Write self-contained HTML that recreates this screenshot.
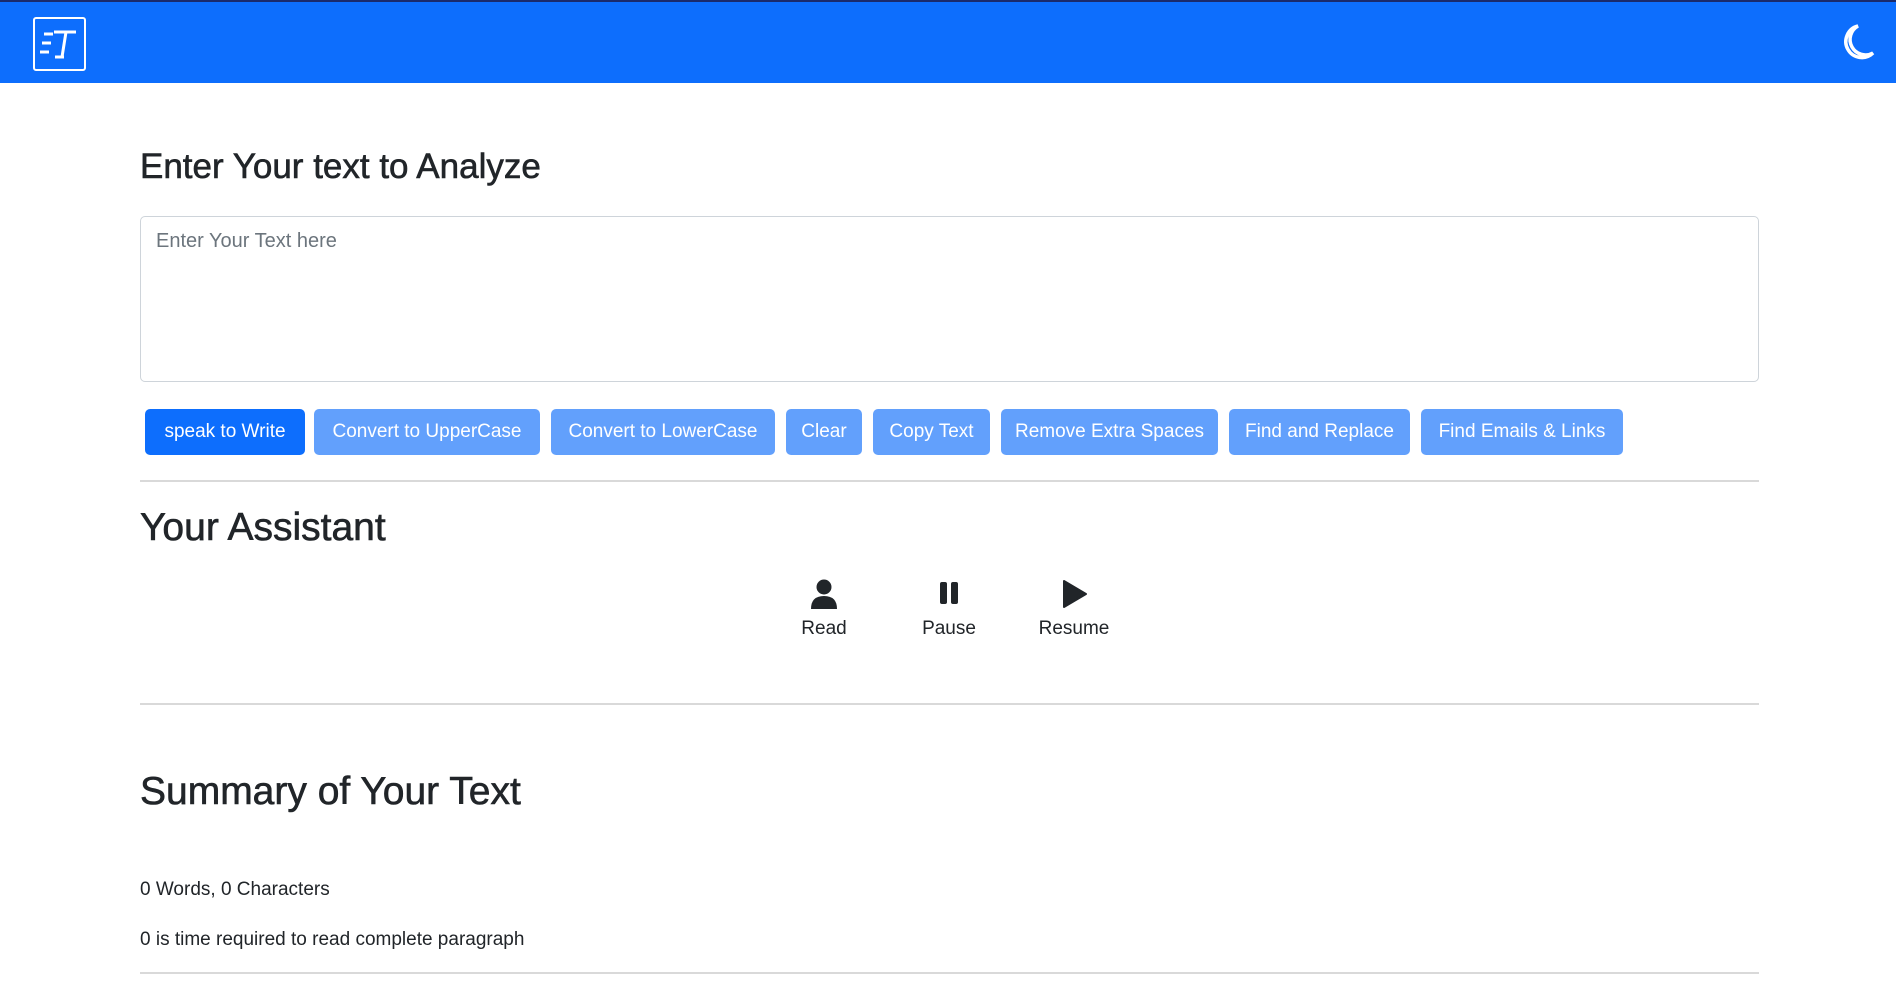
<!DOCTYPE html>
<html><head><meta charset="utf-8"><style>
*{box-sizing:border-box}
body{margin:0;font-family:"Liberation Sans",sans-serif;color:#212529;background:#fff;width:1896px;height:983px;overflow:hidden;position:relative}
.nav{position:absolute;left:0;top:0;width:1896px;height:83px;background:#0d6efd;border-top:2px solid #1a2a6c}
.logo{position:absolute;left:33px;top:15px;width:53px;height:54px;border:2px solid #fff;border-radius:3px}
.abs{position:absolute}
h{position:absolute;font-weight:500;left:140px;white-space:nowrap;-webkit-text-stroke:0.6px #212529}
.ta{position:absolute;left:140px;top:216px;width:1619px;height:166px;border:1px solid #ced4da;border-radius:5px;padding:13px 15px;font-size:20px;color:#6c757d}
.btn{position:absolute;top:409px;height:46px;border-radius:5px;background:#62a0fc;color:#fff;font-size:19px;line-height:46px;text-align:center;white-space:nowrap}
.hr{position:absolute;left:140px;width:1619px;height:2px;background:#d9d9d9}
.ic{position:absolute;font-size:19px;text-align:center;width:120px}
.p{position:absolute;left:140px;font-size:19px}
</style></head><body>
<div class="nav">
<div class="logo"><svg width="49" height="50" viewBox="0 0 49 50"><g stroke="#fff" stroke-width="3" fill="none"><path d="M9 15h9M7 24h9M5 33h9"/><path d="M19 13h22M31 13l-4 25M20 38h9"/></g></svg></div>
<svg class="abs" style="left:1841px;top:21px" width="34" height="38" viewBox="0 0 34 38"><path d="M17 3A16 16 0 1 0 32 30A13 13 0 0 1 17 3Z" fill="none" stroke="#fff" stroke-width="3.5"/></svg>
</div>
<h style="top:147px;font-size:35px">Enter Your text to Analyze</h>
<div class="ta">Enter Your Text here</div>
<div class="btn" style="left:145px;width:160px;background:#0d6efd">speak to Write</div>
<div class="btn" style="left:314px;width:226px">Convert to UpperCase</div>
<div class="btn" style="left:551px;width:224px">Convert to LowerCase</div>
<div class="btn" style="left:786px;width:76px">Clear</div>
<div class="btn" style="left:873px;width:117px">Copy Text</div>
<div class="btn" style="left:1001px;width:217px">Remove Extra Spaces</div>
<div class="btn" style="left:1229px;width:181px">Find and Replace</div>
<div class="btn" style="left:1421px;width:202px">Find Emails &amp; Links</div>
<div class="hr" style="top:480px"></div>
<h style="top:506px;font-size:39px">Your Assistant</h>
<svg class="abs" style="left:810px;top:579px" width="28" height="30" viewBox="0 0 28 30"><circle cx="14" cy="8" r="7.5" fill="#212529"/><path d="M1 30Q1 17 14 17Q27 17 27 30Z" fill="#212529"/></svg>
<div class="ic" style="left:764px;top:618px">Read</div>
<svg class="abs" style="left:938px;top:582px" width="22" height="24"><rect x="2" y="0" width="7" height="22" rx="2" fill="#212529"/><rect x="13" y="0" width="7" height="22" rx="2" fill="#212529"/></svg>
<div class="ic" style="left:889px;top:618px">Pause</div>
<svg class="abs" style="left:1062px;top:579px" width="26" height="30"><path d="M2 2L24 15L2 28Z" fill="#212529" stroke="#212529" stroke-width="2" stroke-linejoin="round"/></svg>
<div class="ic" style="left:1014px;top:618px">Resume</div>
<div class="hr" style="top:703px"></div>
<h style="top:770px;font-size:39px">Summary of Your Text</h>
<div class="p" style="top:879px">0 Words, 0 Characters</div>
<div class="p" style="top:929px">0 is time required to read complete paragraph</div>
<div class="hr" style="top:972px"></div>
</body></html>
